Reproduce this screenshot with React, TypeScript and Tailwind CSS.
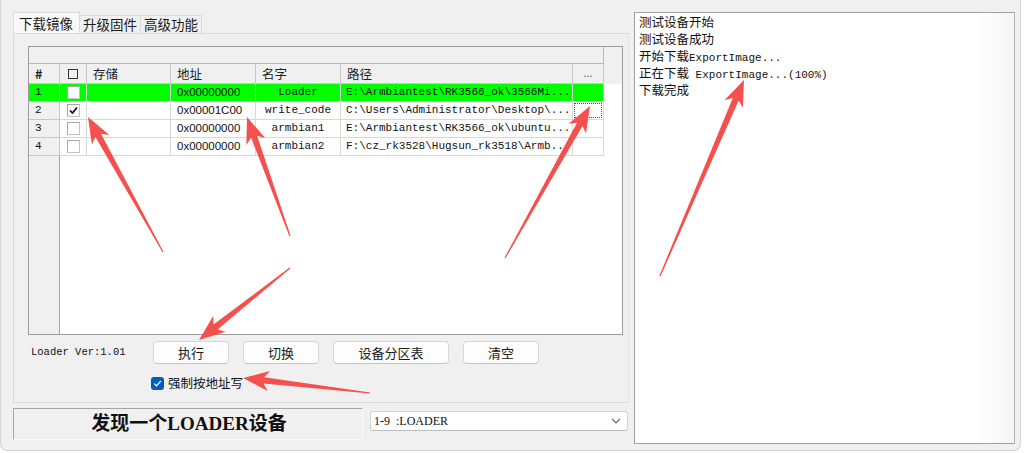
import React from "react";

const cjk = "font-['Noto_Sans_CJK_SC',sans-serif]";
const mono = "font-['Liberation_Mono','Noto_Sans_CJK_SC',monospace]";

const rows = [
  { n: "1", addr: "0x00000000", name: "Loader", path: "E:\\Armbiantest\\RK3566_ok\\3566Mi...", checked: false, green: true },
  { n: "2", addr: "0x00001C00", name: "write_code", path: "C:\\Users\\Administrator\\Desktop\\...", checked: true, focus: true },
  { n: "3", addr: "0x00000000", name: "armbian1", path: "E:\\Armbiantest\\RK3566_ok\\ubuntu..." },
  { n: "4", addr: "0x00000000", name: "armbian2", path: "F:\\cz_rk3528\\Hugsun_rk3518\\Armb..." },
];

function Check({ on }: { on?: boolean }) {
  return (
    <div className="w-[13px] h-[13px] bg-white border border-[#c4c4c4] border-t-[#a8a8a8] border-l-[#a8a8a8] flex items-center justify-center">
      {on && (
        <svg width="9" height="9" viewBox="0 0 9 9">
          <path d="M1 4.5 L3.5 7 L8 1.5" fill="none" stroke="#000" strokeWidth="1.6" />
        </svg>
      )}
    </div>
  );
}

function arrowPts(x1: number, y1: number, x2: number, y2: number) {
  const dx = x2 - x1;
  const dy = y2 - y1;
  const len = Math.hypot(dx, dy);
  const ux = dx / len;
  const uy = dy / len;
  const nx = -uy;
  const ny = ux;
  const hl = 24;
  const bx = x2 - ux * hl;
  const by = y2 - uy * hl;
  const p = (x: number, y: number, k: number) => `${(x + nx * k).toFixed(1)},${(y + ny * k).toFixed(1)}`;
  return [
    p(x1, y1, 0.6),
    p(bx + ux * 3, by + uy * 3, 3.2),
    p(bx - ux * 2, by - uy * 2, 10),
    `${x2},${y2}`,
    p(bx - ux * 2, by - uy * 2, -10),
    p(bx + ux * 3, by + uy * 3, -3.2),
    p(x1, y1, -0.6),
  ].join(" ");
}

const arrows: [number, number, number, number][] = [
  [163, 252, 88, 117],
  [290, 236, 247, 117],
  [505, 258, 590, 106],
  [660, 276, 744, 80],
  [290, 268, 199, 340],
  [370, 393, 243, 378],
];

function Button({ label, w }: { label: string; w: string }) {
  return (
    <div
      className={`${w} h-[23px] rounded-[4px] bg-[#fdfdfd] border border-[#d6d6d6] border-b-[#c4c4c4] flex items-center justify-center text-[13px] text-[#1a1a1a] ${cjk}`}
    >
      {label}
    </div>
  );
}

export default function App() {
  return (
    <div className="w-[1024px] h-[453px] bg-white relative overflow-hidden">
      <div className="w-[1021px] h-[451px] bg-[#f0f0f0] border-r border-b border-l border-[#d4d4d4] rounded-b-[7px] flex gap-[5px] pl-[12px] pt-[12px]">
        {/* left column */}
        <div className="w-[616px] flex flex-col">
          <div className={`h-[21px] flex items-end text-[13.5px] text-[#1a1a1a] ${cjk}`}>
            <div className="w-[67px] h-[21px] bg-[#f9f9f9] border border-b-0 border-[#dadada] pl-[5px] leading-[20px]">下载镜像</div>
            <div className="w-[61px] h-[18px] border-t border-r border-[#dadada] pl-[3px] leading-[17px]">升级固件</div>
            <div className="w-[61px] h-[18px] border-t border-r border-[#dadada] pl-[3px] leading-[17px]">高级功能</div>
          </div>

          <div className="w-[616px] h-[370px] border border-[#dadada] border-r-[#e4e4e4] pl-[14px] pt-[12px] flex flex-col">
            {/* grid */}
            <div className="w-[595px] h-[289px] border border-[#9c9c9c] bg-white flex flex-col overflow-hidden">
              <div className="h-[17px] flex bg-[#f0f0f0]">
                <div className="w-[575px] border-r border-b border-[#b8b8b8]" />
              </div>
              <div className={`h-[20px] flex bg-[#f0f0f0] text-[12.5px] text-[#222] ${cjk}`}>
                <div className="w-[31px] border-r border-b border-[#c8c8c8] pl-[6px] leading-[19px] font-bold">#</div>
                <div className="w-[27px] border-r border-b border-[#c8c8c8] flex items-center justify-center">
                  <div className="w-[10px] h-[10px] border border-[#333]" />
                </div>
                <div className="w-[84px] border-r border-b border-[#c8c8c8] pl-[6px] leading-[19px]">存储</div>
                <div className="w-[85px] border-r border-b border-[#c8c8c8] pl-[6px] leading-[19px]">地址</div>
                <div className="w-[85px] border-r border-b border-[#c8c8c8] pl-[6px] leading-[19px]">名字</div>
                <div className="w-[232px] border-r border-b border-[#c8c8c8] pl-[6px] leading-[19px]">路径</div>
                <div className="w-[31px] border-r border-b border-[#c8c8c8] text-center leading-[17px] text-[#666] text-[11px]">...</div>
              </div>

              {rows.map((r) => (
                <div key={r.n} className={`h-[18px] flex text-[11px] text-[#111] ${r.green ? "bg-[#00ff00]" : "bg-white"}`}>
                  <div className={`w-[31px] border-r border-b border-[#c8c8c8] pl-[6px] leading-[17px] ${mono} ${r.green ? "" : "bg-[#f0f0f0]"}`}>{r.n}</div>
                  <div className="w-[27px] border-r border-b border-[#d8d8d8] flex items-center justify-center">
                    <Check on={r.checked} />
                  </div>
                  <div className="w-[84px] border-r border-b border-[#d8d8d8]" />
                  <div className="w-[85px] border-r border-b border-[#d8d8d8] pl-[6px] leading-[17px] text-[11.5px] font-['Liberation_Sans',sans-serif]">{r.addr}</div>
                  <div className={`w-[85px] border-r border-b border-[#d8d8d8] text-center leading-[17px] ${mono}`}>{r.name}</div>
                  <div className={`w-[232px] border-r border-b border-[#d8d8d8] pl-[5px] leading-[17px] whitespace-pre overflow-hidden ${mono}`}>{r.path}</div>
                  <div className="w-[31px] border-r border-b border-[#d8d8d8] p-[1px]">
                    {r.focus && <div className="w-full h-full border border-dotted border-[#7a4a1e]" />}
                  </div>
                  <div className="flex-1 bg-white" />
                </div>
              ))}

              <div className="flex-1 flex">
                <div className="w-[31px] bg-[#f0f0f0] border-r border-[#a8a8a8]" />
                <div className="flex-1 bg-white" />
              </div>
            </div>

            {/* controls */}
            <div className="flex items-center mt-[6px] h-[23px]">
              <div className={`w-[125px] pl-[3px] text-[10.5px] text-[#111] ${mono}`}>Loader Ver:1.01</div>
              <div className="flex gap-[14px]">
                <Button label="执行" w="w-[76px]" />
                <Button label="切换" w="w-[76px]" />
                <Button label="设备分区表" w="w-[116px]" />
                <Button label="清空" w="w-[76px]" />
              </div>
            </div>
            <div className="flex items-center mt-[10px] pl-[123px] gap-[4px]">
              <div className="w-[13px] h-[13px] rounded-[3px] bg-[#005fb8] flex items-center justify-center">
                <svg width="9" height="9" viewBox="0 0 9 9">
                  <path d="M1.2 4.6 L3.5 6.8 L7.8 2" fill="none" stroke="#fff" strokeWidth="1.2" />
                </svg>
              </div>
              <span className={`text-[12.5px] text-[#111] ${cjk}`}>强制按地址写</span>
            </div>
          </div>

          {/* status bar */}
          <div className="flex mt-[5px]">
            <div className="w-[350px] h-[32px] border border-[#a6a6a6] border-r-[#fafafa] border-b-[#fafafa] flex items-center justify-center">
              <span className="text-[19px] font-bold text-[#111] font-['Liberation_Serif','Noto_Sans_CJK_SC',serif] pl-[2px]">发现一个LOADER设备</span>
            </div>
            <div className="ml-[7px] mt-[3px] w-[258px] h-[20px] bg-white border border-[#d2d2d2] border-b-[#bdbdbd] rounded-[3px] flex items-center justify-between pl-[3px] pr-[6px]">
              <span className="text-[12px] text-[#111] whitespace-pre font-['Liberation_Serif',serif]">1-9  :LOADER</span>
              <svg width="10" height="6" viewBox="0 0 10 6">
                <path d="M1 1 L5 5 L9 1" fill="none" stroke="#666" strokeWidth="1.1" />
              </svg>
            </div>
          </div>
        </div>

        {/* log panel */}
        <div className={`w-[381px] h-[432px] border border-[#a0a0a0] border-r-[#b4b4b4] bg-[linear-gradient(to_right,#ffffff_90%,#f6f6f6)] pl-[4px] text-[12.5px] text-[#111] ${cjk}`}>
          <div className="h-[17px] leading-[17px]">测试设备开始</div>
          <div className="h-[17px] leading-[17px]">测试设备成功</div>
          <div className="h-[17px] leading-[17px] whitespace-pre">
            开始下载<span className={`text-[11px] leading-[17px] ${mono}`}>ExportImage...</span>
          </div>
          <div className="h-[17px] leading-[17px] whitespace-pre">
            正在下载<span className={`text-[11px] leading-[17px] ${mono}`}> ExportImage...(100%)</span>
          </div>
          <div className="h-[17px] leading-[17px]">下载完成</div>
        </div>
      </div>

      <svg className="absolute inset-0 pointer-events-none" width="1024" height="453">
        {arrows.map((a, i) => (
          <polygon key={i} points={arrowPts(a[0], a[1], a[2], a[3])} fill="#f4514e" />
        ))}
      </svg>
    </div>
  );
}
